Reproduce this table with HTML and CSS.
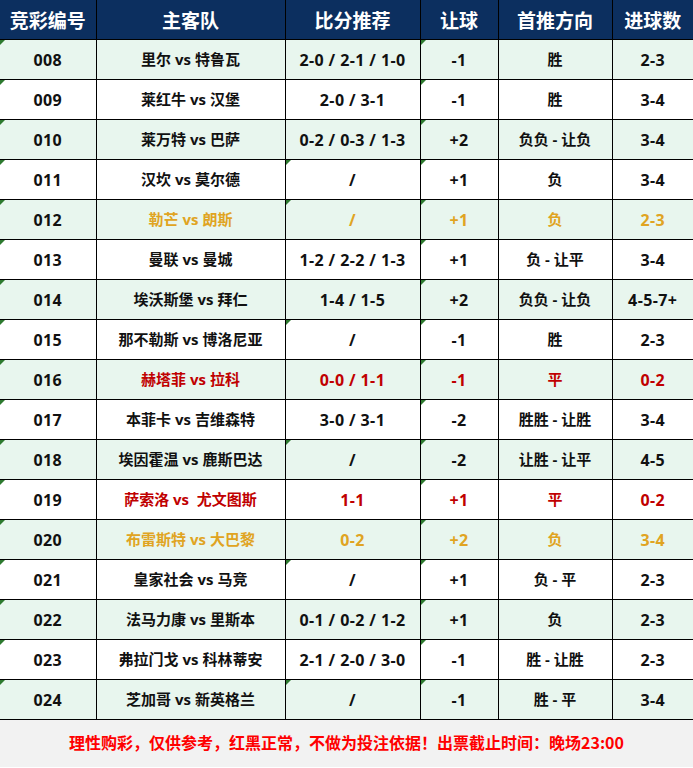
FILE: index.html
```html
<!DOCTYPE html>
<html lang="zh">
<head>
<meta charset="utf-8">
<link rel="stylesheet" href="styles.css">
</head>
<body>
<div class="sheet">
<table class="tips">
<colgroup>
<col class="c1"><col class="c2"><col class="c3"><col class="c4"><col class="c5"><col class="c6">
</colgroup>
<thead>
<tr><th>竞彩编号</th><th>主客队</th><th>比分推荐</th><th>让球</th><th>首推方向</th><th>进球数</th></tr>
</thead>
<tbody>
<tr class="g"><td class="t">008</td><td>里尔 vs 特鲁瓦</td><td>2-0 / 2-1 / 1-0</td><td class="t">-1</td><td>胜</td><td>2-3</td></tr>
<tr><td class="t">009</td><td>莱红牛 vs 汉堡</td><td>2-0 / 3-1</td><td class="t">-1</td><td>胜</td><td>3-4</td></tr>
<tr class="g"><td class="t">010</td><td>莱万特 vs 巴萨</td><td>0-2 / 0-3 / 1-3</td><td class="t">+2</td><td>负负 - 让负</td><td>3-4</td></tr>
<tr><td class="t">011</td><td>汉坎 vs 莫尔德</td><td class="t">/</td><td class="t">+1</td><td>负</td><td>3-4</td></tr>
<tr class="g gold"><td class="t">012</td><td>勒芒 vs 朗斯</td><td class="t">/</td><td class="t">+1</td><td>负</td><td>2-3</td></tr>
<tr><td class="t">013</td><td>曼联 vs 曼城</td><td>1-2 / 2-2 / 1-3</td><td class="t">+1</td><td>负 - 让平</td><td>3-4</td></tr>
<tr class="g"><td class="t">014</td><td>埃沃斯堡 vs 拜仁</td><td>1-4 / 1-5</td><td class="t">+2</td><td>负负 - 让负</td><td>4-5-7+</td></tr>
<tr><td class="t">015</td><td>那不勒斯 vs 博洛尼亚</td><td class="t">/</td><td class="t">-1</td><td>胜</td><td>2-3</td></tr>
<tr class="g red"><td class="t">016</td><td>赫塔菲 vs 拉科</td><td>0-0 / 1-1</td><td class="t">-1</td><td>平</td><td>0-2</td></tr>
<tr><td class="t">017</td><td>本菲卡 vs 吉维森特</td><td>3-0 / 3-1</td><td class="t">-2</td><td>胜胜 - 让胜</td><td>3-4</td></tr>
<tr class="g"><td class="t">018</td><td>埃因霍温 vs 鹿斯巴达</td><td class="t">/</td><td class="t">-2</td><td>让胜 - 让平</td><td>4-5</td></tr>
<tr class="red"><td class="t">019</td><td>萨索洛 vs&nbsp; 尤文图斯</td><td>1-1</td><td class="t">+1</td><td>平</td><td>0-2</td></tr>
<tr class="g gold"><td class="t">020</td><td>布雷斯特 vs 大巴黎</td><td>0-2</td><td class="t">+2</td><td>负</td><td>3-4</td></tr>
<tr><td class="t">021</td><td>皇家社会 vs 马竞</td><td class="t">/</td><td class="t">+1</td><td>负 - 平</td><td>2-3</td></tr>
<tr class="g"><td class="t">022</td><td>法马力康 vs 里斯本</td><td>0-1 / 0-2 / 1-2</td><td class="t">+1</td><td>负</td><td>2-3</td></tr>
<tr><td class="t">023</td><td>弗拉门戈 vs 科林蒂安</td><td>2-1 / 2-0 / 3-0</td><td class="t">-1</td><td>胜 - 让胜</td><td>2-3</td></tr>
<tr class="g"><td class="t">024</td><td>芝加哥 vs 新英格兰</td><td class="t">/</td><td class="t">-1</td><td>胜 - 平</td><td>3-4</td></tr>
</tbody>
</table>
<div class="note">理性购彩，仅供参考，红黑正常，不做为投注依据！出票截止时间：晚场23:00</div>
</div>
</body>
</html>
```

FILE: styles.css
```css
html, body {
  margin: 0;
  padding: 0;
  background: #ffffff;
}
.sheet {
  width: 693px;
  height: 768px;
  overflow: hidden;
  font-family: "Open Sans", "Noto Sans CJK SC", sans-serif;
}
.tips {
  width: 693px;
  border-collapse: collapse;
  table-layout: fixed;
}
.c1 { width: 96px; }
.c2 { width: 189px; }
.c3 { width: 135px; }
.c4 { width: 78px; }
.c5 { width: 114px; }
.c6 { width: 81px; }
.tips th {
  height: 39px;
  padding: 0;
  background: #0c2f5f;
  color: #ffffff;
  font-family: "Noto Sans CJK SC", sans-serif;
  font-size: 19px;
  font-weight: 700;
  border: 1px solid #000000;
  border-top: none;
  text-align: center;
  line-height: 1;
}
.tips td {
  position: relative;
  height: 39px;
  padding: 0;
  border: 1px solid #000000;
  text-align: center;
  font-size: 15px;
  font-weight: 700;
  color: #111111;
  line-height: 1;
  white-space: nowrap;
}
.tips td:nth-child(1),
.tips td:nth-child(3),
.tips td:nth-child(4),
.tips td:nth-child(6) {
  font-size: 16px;
  letter-spacing: 0.4px;
}
.tips tr.g td { background: #e8f6ee; }
.tips tr td:first-child { border-left: none; }
.tips tr td:last-child, .tips tr th:last-child { border-right: none; }
.tips tr th:first-child { border-left: none; }
.tips tr.gold td { color: #e0a422; }
.tips tr.red td { color: #c00000; }
.tips tr.gold td:first-child, .tips tr.red td:first-child { color: #111111; }
.tips td.t::before {
  content: "";
  position: absolute;
  left: 0;
  top: 0;
  width: 0;
  height: 0;
  border-top: 5px solid #2d7a2f;
  border-right: 5px solid transparent;
}
.note {
  height: 47px;
  background: #f2f2f2;
  color: #ff0000;
  font-family: "Noto Sans CJK SC", sans-serif;
  font-size: 16px;
  font-weight: 700;
  text-align: center;
  line-height: 44px;
}
```
